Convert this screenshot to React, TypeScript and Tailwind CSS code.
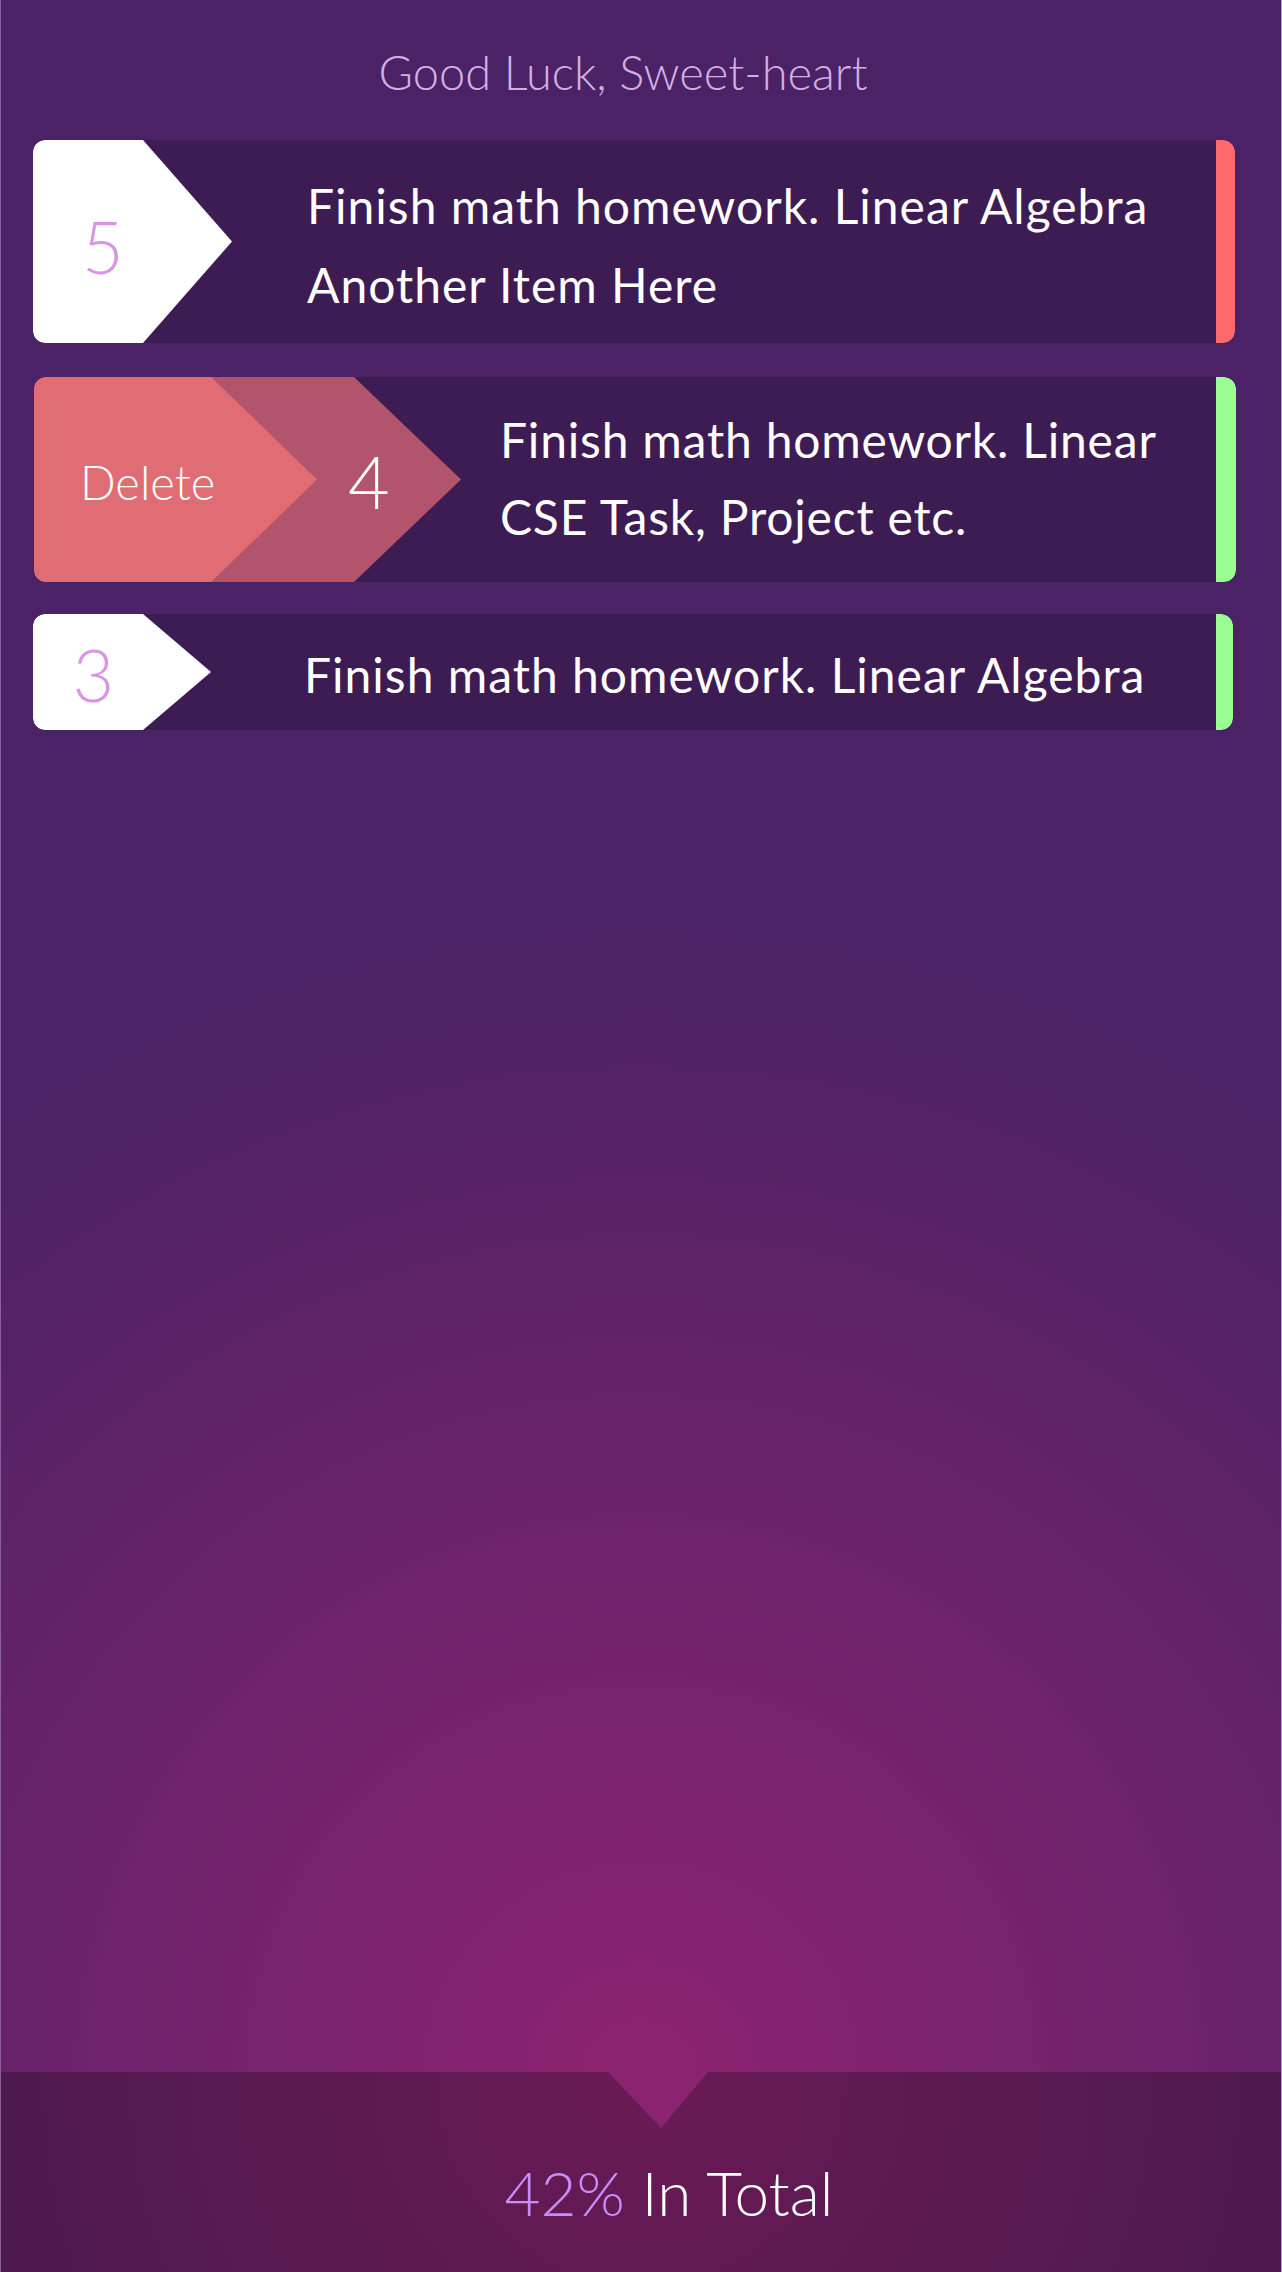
import React from "react";

const lato = "font-['Lato','Noto_Sans',sans-serif]";

const App = () => {
  return (
    <div
      className={`${lato} w-full min-h-[2272px] flex flex-col border-l border-r border-l-[#8a5f9e] border-r-[#b497cc] bg-[radial-gradient(circle_1150px_at_50%_2080px,#8d2371_0%,#4b2265_100%)]`}
    >
      {/* Task list */}
      <div className="flex-1 pl-[32px] pr-[46px]">
        <h1 className="h-[140px] pt-[4px] pr-[22px] flex items-center justify-center text-[47px] leading-none font-light text-[#cfb0e4]">
          Good Luck, Sweet-heart
        </h1>

        <div className="flex flex-col gap-[34px]">
          {/* Item 5 */}
          <div className="flex h-[203px] rounded-[12px] overflow-hidden bg-[#3d1c53]">
            <div className="w-[199px] shrink-0 bg-white rounded-l-[12px] [clip-path:polygon(0_0,110px_0,199px_50%,110px_100%,0_100%)] flex items-center">
              <span className="w-[140px] pt-[8px] text-center text-[72px] leading-none font-light text-[#d795e4]">
                5
              </span>
            </div>
            <div className="flex-1 ml-[75px] pt-[26px] text-[48px] tracking-[1px] leading-[79px] text-white whitespace-nowrap">
              <div>Finish math homework. Linear Algebra</div>
              <div>Another Item Here</div>
            </div>
            <div className="w-[19px] shrink-0 bg-[#fe6a6a] rounded-r-[12px]" />
          </div>

          {/* Item 4, swiped to delete */}
          <div className="flex flex-col gap-[32px]">
            <div className="flex h-[205px] rounded-[12px] overflow-hidden bg-[#3d1c53] ml-[1px] mr-[-1px]">
              <div className="grid shrink-0 w-[427px]">
                <div className="[grid-area:1/1] w-[427px] bg-[#b2546b] [clip-path:polygon(0_0,320px_0,427px_50%,320px_100%,0_100%)] flex items-center pl-[314px] pt-[2px]">
                  <span className="text-[72px] leading-none font-light text-white">4</span>
                </div>
                <div className="[grid-area:1/1] w-[283px] bg-[#e06d74] rounded-l-[12px] [clip-path:polygon(0_0,177px_0,283px_50%,177px_100%,0_100%)] flex items-center pl-[46px] pt-[6px]">
                  <span className="text-[47px] leading-none font-light text-white">Delete</span>
                </div>
              </div>
              <div className="flex-1 ml-[39px] pt-[24px] text-[48px] tracking-[0.8px] leading-[77px] text-white whitespace-nowrap">
                <div>Finish math homework. Linear</div>
                <div>CSE Task, Project etc.</div>
              </div>
              <div className="w-[20px] shrink-0 bg-[#9afe92] rounded-r-[12px]" />
            </div>

            {/* Item 3 */}
            <div className="flex h-[116px] rounded-[12px] overflow-hidden bg-[#3d1c53] mr-[2px]">
              <div className="w-[178px] shrink-0 bg-white rounded-l-[12px] [clip-path:polygon(0_0,110px_0,178px_50%,110px_100%,0_100%)] flex items-center">
                <span className="w-[121px] pt-[4px] text-center text-[72px] leading-none font-light text-[#d795e4]">
                  3
                </span>
              </div>
              <div className="flex-1 ml-[93px] pt-[21px] text-[48px] tracking-[1px] leading-[79px] text-white whitespace-nowrap">
                Finish math homework. Linear Algebra
              </div>
              <div className="w-[17px] shrink-0 bg-[#9afe92] rounded-r-[12px]" />
            </div>
          </div>
        </div>
      </div>

      {/* Footer */}
      <div className="h-[200px] bg-black/25 [clip-path:polygon(0_0,607px_0,660px_56px,707px_0,100%_0,100%_100%,0_100%)] pt-[89px] pl-[56px] flex justify-center">
        <p className="text-[62px] leading-none font-light text-white">
          <span className="text-[#c58df5]">42%</span> In Total
        </p>
      </div>
    </div>
  );
};

export default App;
